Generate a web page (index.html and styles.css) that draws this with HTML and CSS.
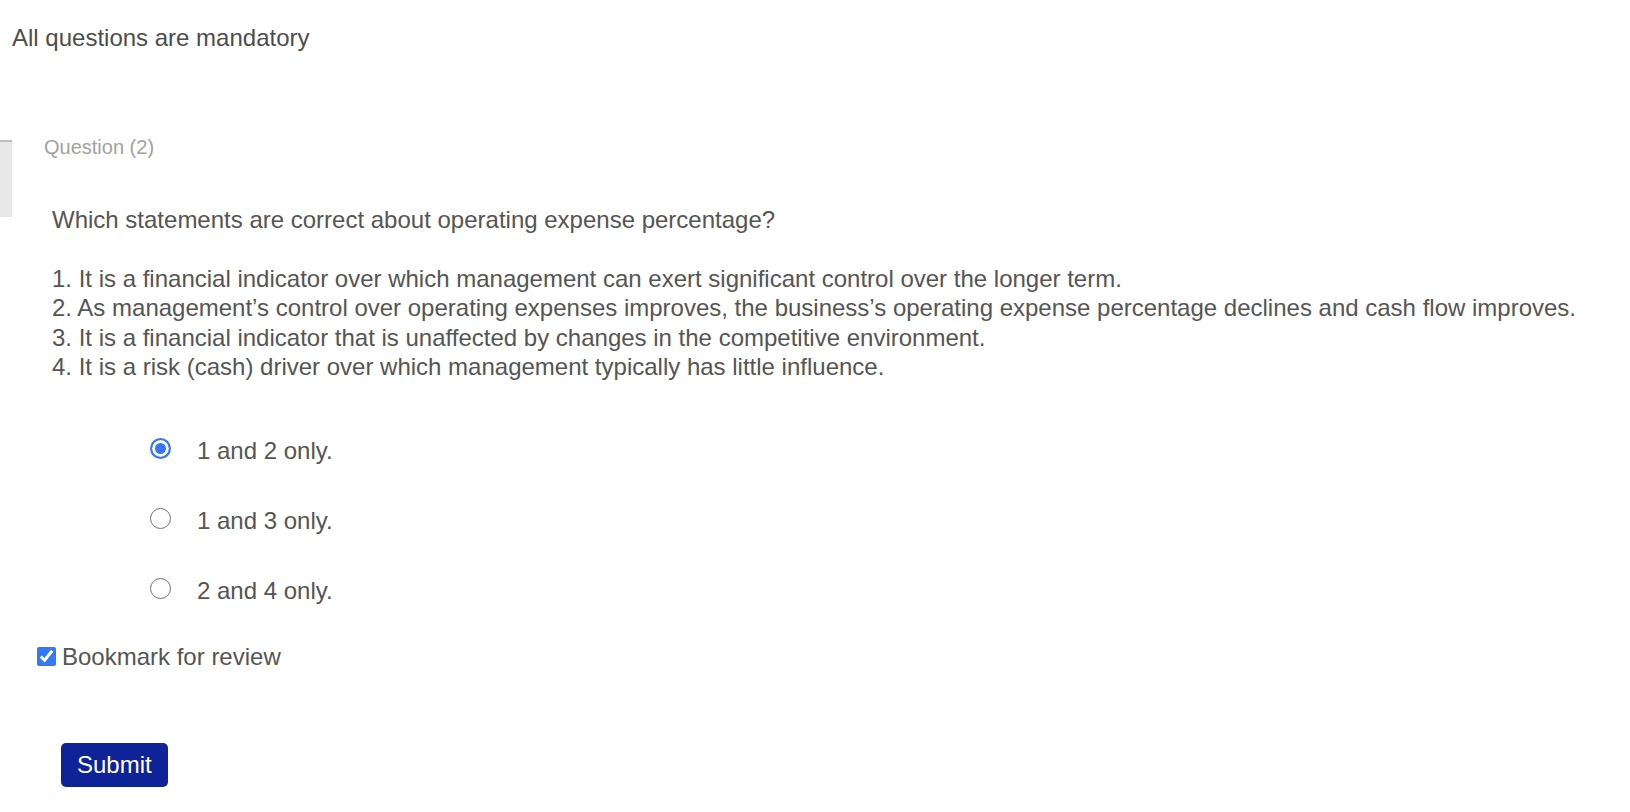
FILE: index.html
```html
<!DOCTYPE html>
<html lang="en">
<head>
<meta charset="utf-8">
<title>Question</title>
<link rel="stylesheet" href="styles.css">
</head>
<body>
<p class="notice">All questions are mandatory</p>
<section class="question">
  <div class="strip"></div>
  <div class="qbody">
    <div class="qlabel">Question (2)</div>
    <div class="qtext">Which statements are correct about operating expense percentage?<br><br>1. It is a financial indicator over which management can exert significant control over the longer term.<br>2. As management’s control over operating expenses improves, the business’s operating expense percentage declines and cash flow improves.<br>3. It is a financial indicator that is unaffected by changes in the competitive environment.<br>4. It is a risk (cash) driver over which management typically has little influence.</div>
    <div class="options">
      <label class="option"><input type="radio" name="q2" checked><span>1 and 2 only.</span></label>
      <label class="option"><input type="radio" name="q2"><span>1 and 3 only.</span></label>
      <label class="option"><input type="radio" name="q2"><span>2 and 4 only.</span></label>
    </div>
  </div>
</section>
<label class="bookmark"><input type="checkbox" checked><span>Bookmark for review</span></label>
<div class="actions"><button class="submit" type="button">Submit</button></div>
</body>
</html>
```
FILE: styles.css
```css
html, body {
  margin: 0;
  padding: 0;
  background: #ffffff;
}
body {
  font-family: "Liberation Sans", Arial, Helvetica, sans-serif;
  color: #555555;
  font-size: 24px;
}
.notice {
  margin: 0;
  padding: 24px 0 0 12px;
  line-height: 28px;
  color: #4d4d4d;
}
.question {
  display: flex;
  align-items: flex-start;
  margin-top: 84px;
}
.strip {
  flex: 0 0 12px;
  height: 75px;
  margin-top: 4px;
  background: #e8e8ea;
  border-top: 2px solid #bdbdbd;
}
.qbody {
  padding-left: 32px;
}
.qlabel {
  font-size: 20px;
  line-height: 23px;
  color: #a2a2a2;
}
.qtext {
  margin: 46px 0 0 8px;
  line-height: 29.4px;
}
.options {
  margin-top: 34px;
  padding-left: 106px;
}
.option {
  display: flex;
  align-items: center;
  height: 70px;
}
.option input {
  appearance: none;
  -webkit-appearance: none;
  box-sizing: border-box;
  margin: -3px 0 0 0;
  width: 21px;
  height: 21px;
  border-radius: 50%;
  border: 1.6px solid #6f6f6f;
  background: #ffffff;
}
.option input:checked {
  border: 2px solid #3478f6;
  background: #3478f6;
  box-shadow: inset 0 0 0 3px #ffffff;
}
.option span {
  margin-left: 26px;
  line-height: 27px;
}
.bookmark {
  display: flex;
  align-items: center;
  margin: 18px 0 0 37px;
  line-height: 27px;
}
.bookmark input {
  margin: 0;
  width: 19px;
  height: 19px;
  accent-color: #3478f6;
}
.bookmark span {
  margin-left: 6px;
}
.actions {
  margin: 73px 0 0 61px;
}
.submit {
  font-family: "Liberation Sans", Arial, Helvetica, sans-serif;
  font-size: 24px;
  line-height: 28px;
  padding: 8px 16px;
  color: #ffffff;
  background: #0f2399;
  border: none;
  border-radius: 5px;
}
```
